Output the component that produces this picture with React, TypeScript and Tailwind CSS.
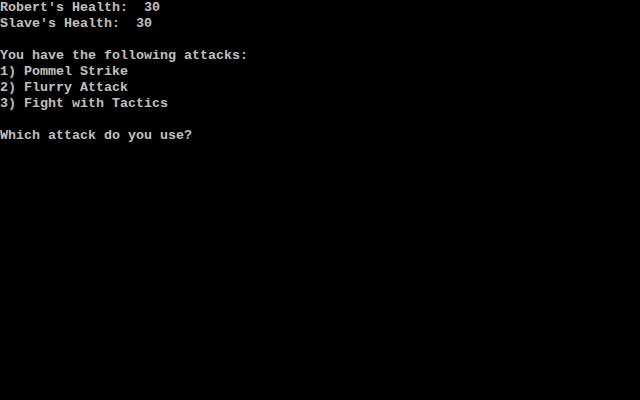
import React from "react";

const lines = [
  "Robert's Health:  30",
  "Slave's Health:  30",
  "",
  "You have the following attacks:",
  "1) Pommel Strike",
  "2) Flurry Attack",
  "3) Fight with Tactics",
  "",
  "Which attack do you use?",
];

const App: React.FC = () => {
  return (
    <div className="w-[640px] h-[400px] bg-black overflow-hidden">
      <pre className="m-0 font-['Liberation_Mono',monospace] font-bold text-[13.333px] leading-[16px] text-[#c0c0c0] whitespace-pre">
        {lines.map((line, i) => (
          <div key={i} className="h-[16px]">
            {line}
          </div>
        ))}
      </pre>
    </div>
  );
};

export default App;
